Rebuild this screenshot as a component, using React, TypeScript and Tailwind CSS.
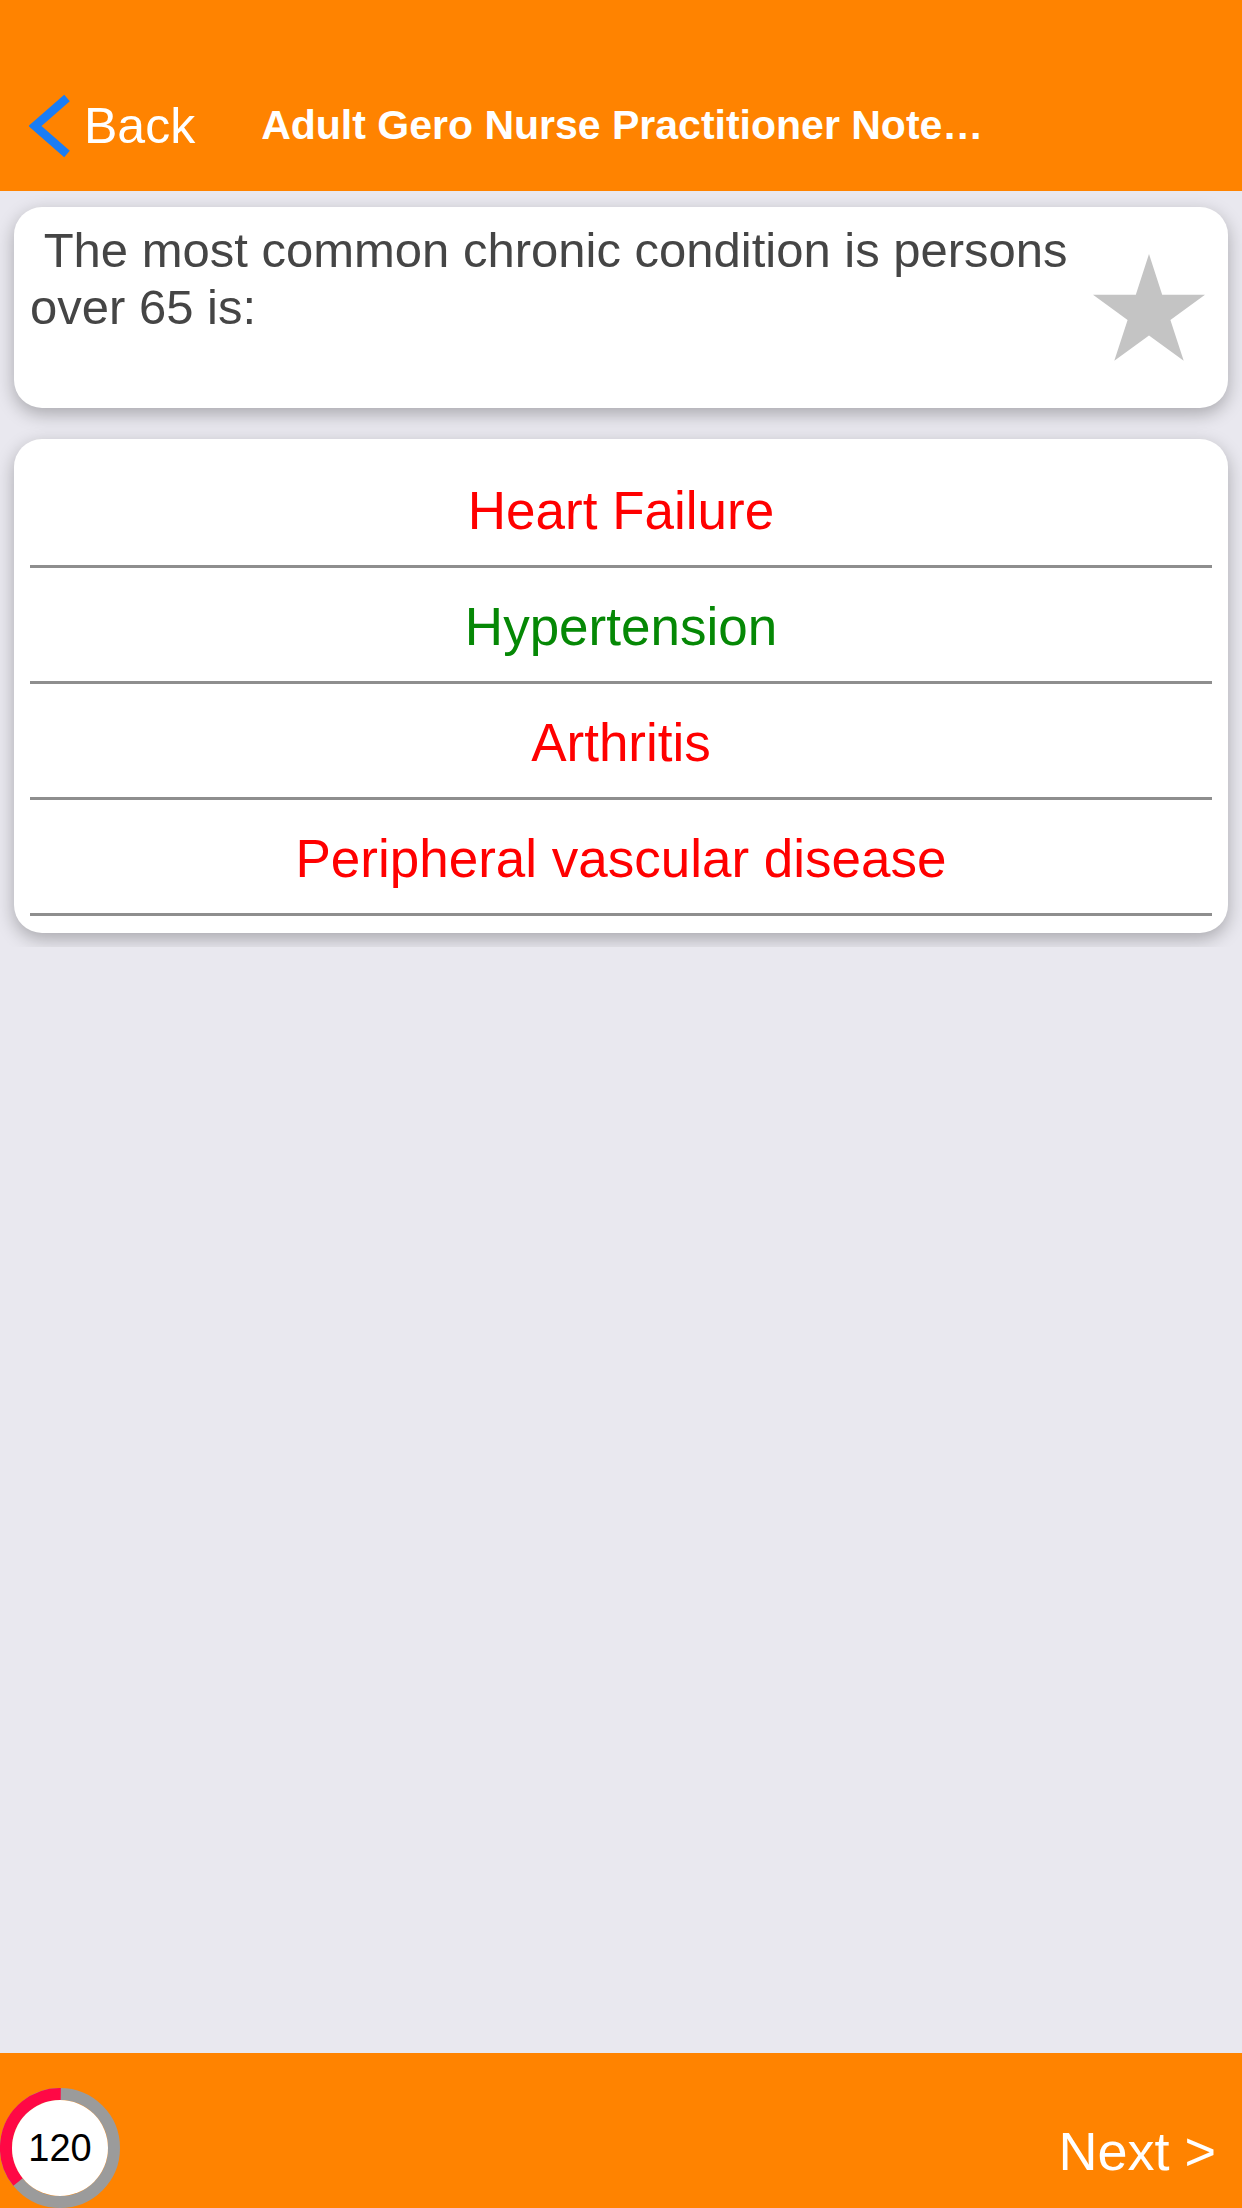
import React from 'react';

// Quiz question screen: orange nav bar, question card, answers list, timer footer
const answers = [
  { label: 'Heart Failure', correct: false },
  { label: 'Hypertension', correct: true },
  { label: 'Arthritis', correct: false },
  { label: 'Peripheral vascular disease', correct: false },
];

function BackChevron() {
  return (
    <svg width="42" height="64" viewBox="0 0 42 64" className="shrink-0">
      <path d="M38 4 L6 32 L38 60" fill="none" stroke="#1a7df5" strokeWidth="8.5" strokeLinejoin="miter" />
    </svg>
  );
}

function Star() {
  return (
    <svg width="112" height="107" viewBox="0 0 112 107">
      <polygon
        points="56,0 69.2,40.8 112,40.8 77.4,66 90.7,106.7 56,81.5 21.3,106.7 34.6,66 0,40.8 42.8,40.8"
        fill="#c4c4c4"
      />
    </svg>
  );
}

function TimerRing({ value }: { value: number }) {
  const r = 54;
  const c = 2 * Math.PI * r;
  const red = c * 0.36;
  return (
    <div className="relative w-[120px] h-[120px] shrink-0">
      <svg width="120" height="120" viewBox="0 0 120 120" className="absolute inset-0">
        <circle cx="60" cy="60" r={r} fill="none" stroke="#9b9b9b" strokeWidth="12" />
        <circle
          cx="60"
          cy="60"
          r={r}
          fill="none"
          stroke="#ff0845"
          strokeWidth="12"
          strokeDasharray={`${red} ${c}`}
          transform="rotate(141 60 60)"
        />
        <circle cx="60" cy="60" r="48" fill="#ffffff" />
      </svg>
      <div className="absolute inset-0 flex items-center justify-center text-[38px] leading-none text-black">
        {value}
      </div>
    </div>
  );
}

export default function App() {
  return (
    <div className="w-[1242px] h-[2208px] flex flex-col bg-[#e9e8ef] font-['Liberation_Sans',Arial,sans-serif] overflow-hidden">
      {/* nav bar */}
      <header className="h-[191px] shrink-0 bg-[#ff8300] pt-[60px] flex items-center">
        <div className="flex items-center pl-[29px]">
          <BackChevron />
          <span className="ml-[13px] text-[50px] leading-none text-white">Back</span>
        </div>
        <div className="ml-[66px] text-[41px] font-bold leading-none text-white whitespace-nowrap">
          Adult Gero Nurse Practitioner Note…
        </div>
      </header>

      {/* scroll content */}
      <main className="h-[756px] shrink-0 overflow-hidden px-[14px] pt-[16px]">
        <div className="h-[201px] rounded-[28px] bg-white shadow-[0_6px_18px_rgba(0,0,0,0.28)] flex">
          <p className="flex-1 pl-[16px] pt-[15px] text-[49px] leading-[57px] text-[#454545] whitespace-pre-wrap">
            {' The most common chronic condition is persons over 65 is:'}
          </p>
          <div className="w-[135px] shrink-0 flex items-center justify-end pr-[23px]">
            <Star />
          </div>
        </div>

        <div className="mt-[31px] rounded-[28px] bg-white shadow-[0_6px_18px_rgba(0,0,0,0.28)] pt-[13px] pb-[17px]">
          {answers.map((a) => (
            <div
              key={a.label}
              className="mx-[16px] h-[116px] border-b-[3px] border-[#8e8e8e] flex items-center justify-center pt-[4px]"
            >
              <span className={`text-[53px] leading-none ${a.correct ? 'text-[#058805]' : 'text-[#ff0000]'}`}>
                {a.label}
              </span>
            </div>
          ))}
        </div>
      </main>

      <div className="flex-1" />

      {/* footer */}
      <footer className="h-[155px] shrink-0 bg-[#ff8300] flex items-end justify-between">
        <TimerRing value={120} />
        <span className="mb-[30px] pr-[26px] text-[54px] leading-none text-white">Next &gt;</span>
      </footer>
    </div>
  );
}
